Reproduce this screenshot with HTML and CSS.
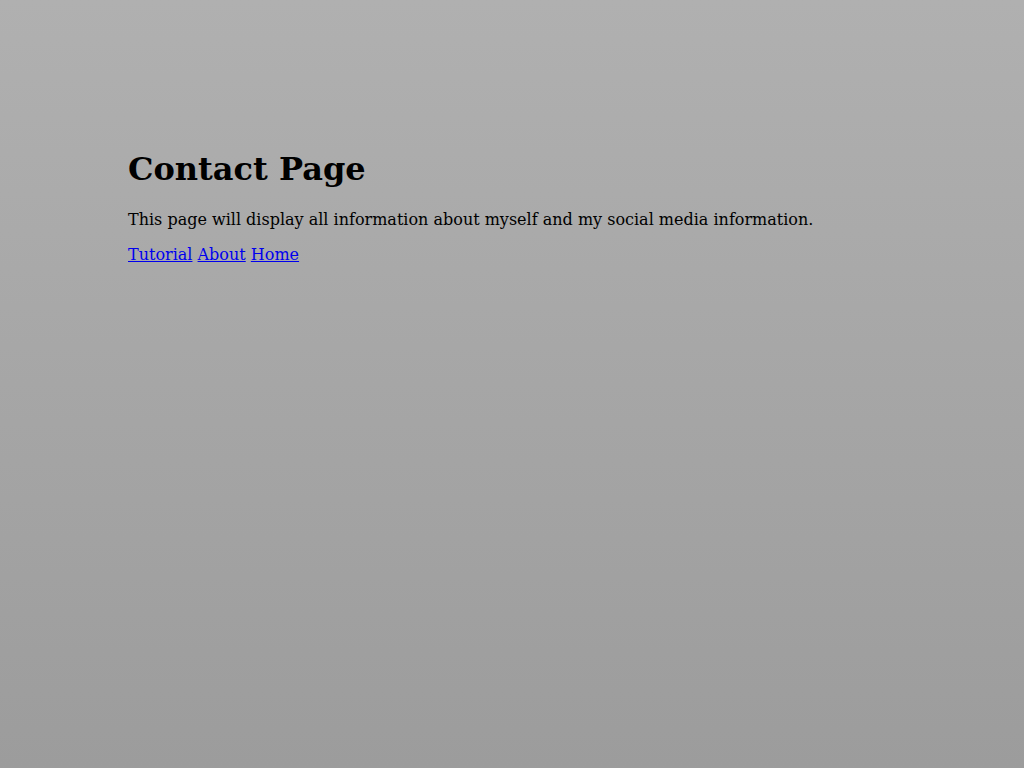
FILE: index.html
```html
<!DOCTYPE html>
<html>
<head>
<meta charset="utf-8">
<title>Contact Page</title>
<link rel="stylesheet" href="styles.css">
</head>
<body>
<main class="page">
  <h1 class="title">Contact Page</h1>
  <p class="intro">This page will display all information about myself and my social media information.</p>
  <p class="nav"><a href="#">Tutorial</a> <a href="#">About</a> <a href="#">Home</a></p>
</main>
</body>
</html>
```
FILE: styles.css
```css
html {
  height: 100%;
}
body {
  margin: 0;
  min-height: 100%;
  background: linear-gradient(to bottom, #b0b0b0, #9c9c9c);
  font-family: "DejaVu Serif", serif;
  color: #000;
}
.page {
  width: 768px;
  margin: 0 auto;
  padding-top: 129px;
}
.title {
  font-size: 32px;
  margin: 21.44px 0;
}
.intro, .nav {
  font-size: 16px;
  margin: 16px 0;
}
.nav a {
  color: #0000ee;
}
```
